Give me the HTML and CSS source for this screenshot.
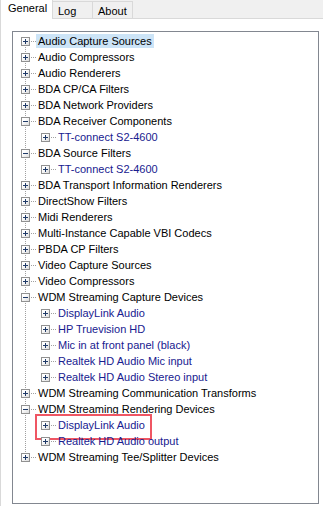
FILE: index.html
```html
<html>

<head>
    <title>Filters</title>
    <link rel="stylesheet" href="styles.css">
</head>

<body>
    <div class="tabs">
        <div class="tab tab-general active">General</div>
        <div class="tab tab-log">Log</div>
        <div class="tab tab-about">About</div>
    </div>
    <div class="panel">
        <div class="tree">
            <ul class="level root">
                <li><div class="row selected"><span class="exp plus"></span><span class="stub"></span><span class="label">Audio Capture Sources</span></div></li>
                <li><div class="row"><span class="exp plus"></span><span class="stub"></span><span class="label">Audio Compressors</span></div></li>
                <li><div class="row"><span class="exp plus"></span><span class="stub"></span><span class="label">Audio Renderers</span></div></li>
                <li><div class="row"><span class="exp plus"></span><span class="stub"></span><span class="label">BDA CP/CA Filters</span></div></li>
                <li><div class="row"><span class="exp plus"></span><span class="stub"></span><span class="label">BDA Network Providers</span></div></li>
                <li>
                    <div class="row"><span class="exp minus"></span><span class="stub"></span><span class="label">BDA Receiver Components</span></div>
                    <ul class="level child">
                        <li><div class="row"><span class="exp plus"></span><span class="stub"></span><span class="label">TT-connect S2-4600</span></div></li>
                    </ul>
                </li>
                <li>
                    <div class="row"><span class="exp minus"></span><span class="stub"></span><span class="label">BDA Source Filters</span></div>
                    <ul class="level child">
                        <li><div class="row"><span class="exp plus"></span><span class="stub"></span><span class="label">TT-connect S2-4600</span></div></li>
                    </ul>
                </li>
                <li><div class="row"><span class="exp plus"></span><span class="stub"></span><span class="label">BDA Transport Information Renderers</span></div></li>
                <li><div class="row"><span class="exp plus"></span><span class="stub"></span><span class="label">DirectShow Filters</span></div></li>
                <li><div class="row"><span class="exp plus"></span><span class="stub"></span><span class="label">Midi Renderers</span></div></li>
                <li><div class="row"><span class="exp plus"></span><span class="stub"></span><span class="label">Multi-Instance Capable VBI Codecs</span></div></li>
                <li><div class="row"><span class="exp plus"></span><span class="stub"></span><span class="label">PBDA CP Filters</span></div></li>
                <li><div class="row"><span class="exp plus"></span><span class="stub"></span><span class="label">Video Capture Sources</span></div></li>
                <li><div class="row"><span class="exp plus"></span><span class="stub"></span><span class="label">Video Compressors</span></div></li>
                <li>
                    <div class="row"><span class="exp minus"></span><span class="stub"></span><span class="label">WDM Streaming Capture Devices</span></div>
                    <ul class="level child">
                        <li><div class="row"><span class="exp plus"></span><span class="stub"></span><span class="label">DisplayLink Audio</span></div></li>
                        <li><div class="row"><span class="exp plus"></span><span class="stub"></span><span class="label">HP Truevision HD</span></div></li>
                        <li><div class="row"><span class="exp plus"></span><span class="stub"></span><span class="label">Mic in at front panel (black)</span></div></li>
                        <li><div class="row"><span class="exp plus"></span><span class="stub"></span><span class="label">Realtek HD Audio Mic input</span></div></li>
                        <li><div class="row"><span class="exp plus"></span><span class="stub"></span><span class="label">Realtek HD Audio Stereo input</span></div></li>
                    </ul>
                </li>
                <li><div class="row"><span class="exp plus"></span><span class="stub"></span><span class="label">WDM Streaming Communication Transforms</span></div></li>
                <li>
                    <div class="row"><span class="exp minus"></span><span class="stub"></span><span class="label">WDM Streaming Rendering Devices</span></div>
                    <ul class="level child">
                        <li><div class="row marked"><span class="exp plus"></span><span class="stub"></span><span class="label">DisplayLink Audio</span></div></li>
                        <li><div class="row"><span class="exp plus"></span><span class="stub"></span><span class="label">Realtek HD Audio output</span></div></li>
                    </ul>
                </li>
                <li><div class="row"><span class="exp plus"></span><span class="stub"></span><span class="label">WDM Streaming Tee/Splitter Devices</span></div></li>
            </ul>
        </div>
    </div>
</body>

</html>
```

FILE: styles.css
```css
* {
    box-sizing: border-box;
}

html, body {
    margin: 0;
    padding: 0;
    background: #fff;
    font-family: "Liberation Sans", Arial, sans-serif;
    width: 323px;
    height: 506px;
    overflow: hidden;
}

.tabs {
    display: flex;
    height: 19px;
    background: #f0f0f0;
    border-bottom: 1px solid #d9d9d9;
}

.tab {
    font-size: 11px;
    line-height: 18px;
    height: 18px;
    color: #000;
    padding-left: 5px;
    border-right: 1px solid #d9d9d9;
    border-top: 1px solid #d9d9d9;
    margin-top: 1px;
}

.tab-general {
    width: 53px;
    padding-left: 7px;
}

.tab-log {
    width: 40px;
}

.tab-about {
    width: 40px;
}

.tab.active {
    background: #fff;
    height: 19px;
    margin-top: 0;
    border-top: none;
    border-left: 1px solid #d9d9d9;
    line-height: 17px;
}

.panel {
    height: 487px;
    border-left: 1px solid #d9d9d9;
    padding: 12px 4px 0 11px;
}

.tree {
    height: 473px;
    border: 1px solid #828790;
    background: #fff;
    padding-top: 1px;
    overflow: hidden;
    font-size: 11px;
}

.level {
    list-style: none;
    margin: 0;
    padding: 0;
}

.root {
    padding-left: 8px;
    background-image: repeating-linear-gradient(to bottom, #a0a0a0 0 1px, transparent 1px 2px);
    background-repeat: no-repeat;
    background-size: 1px calc(100% - 16px);
    background-position: 12px 8px;
}

.child {
    padding-left: 20px;
}

.row {
    display: flex;
    align-items: center;
    height: 16px;
    position: relative;
}

.exp {
    width: 9px;
    height: 9px;
    border: 1px solid #919191;
    background: linear-gradient(135deg, #fff 30%, #dcdcdc);
    position: relative;
    flex: none;
}

.exp::before {
    content: "";
    position: absolute;
    left: 1px;
    top: 3px;
    width: 5px;
    height: 1px;
    background: #1f3a68;
}

.plus::after {
    content: "";
    position: absolute;
    left: 3px;
    top: 1px;
    width: 1px;
    height: 5px;
    background: #1f3a68;
}

.stub {
    width: 6px;
    height: 1px;
    flex: none;
    background-image: repeating-linear-gradient(to right, transparent 0 1px, #a0a0a0 1px 2px);
}

.label {
    padding: 0 2px;
    height: 14px;
    line-height: 14px;
    white-space: nowrap;
    color: #000;
}

.child .label {
    color: #17208f;
}

.selected .label {
    background: #cce4f7;
}

.marked::after {
    content: "";
    position: absolute;
    left: -6px;
    top: -3px;
    width: 113px;
    height: 22px;
    border: 2px solid #ef5663;
}
```
